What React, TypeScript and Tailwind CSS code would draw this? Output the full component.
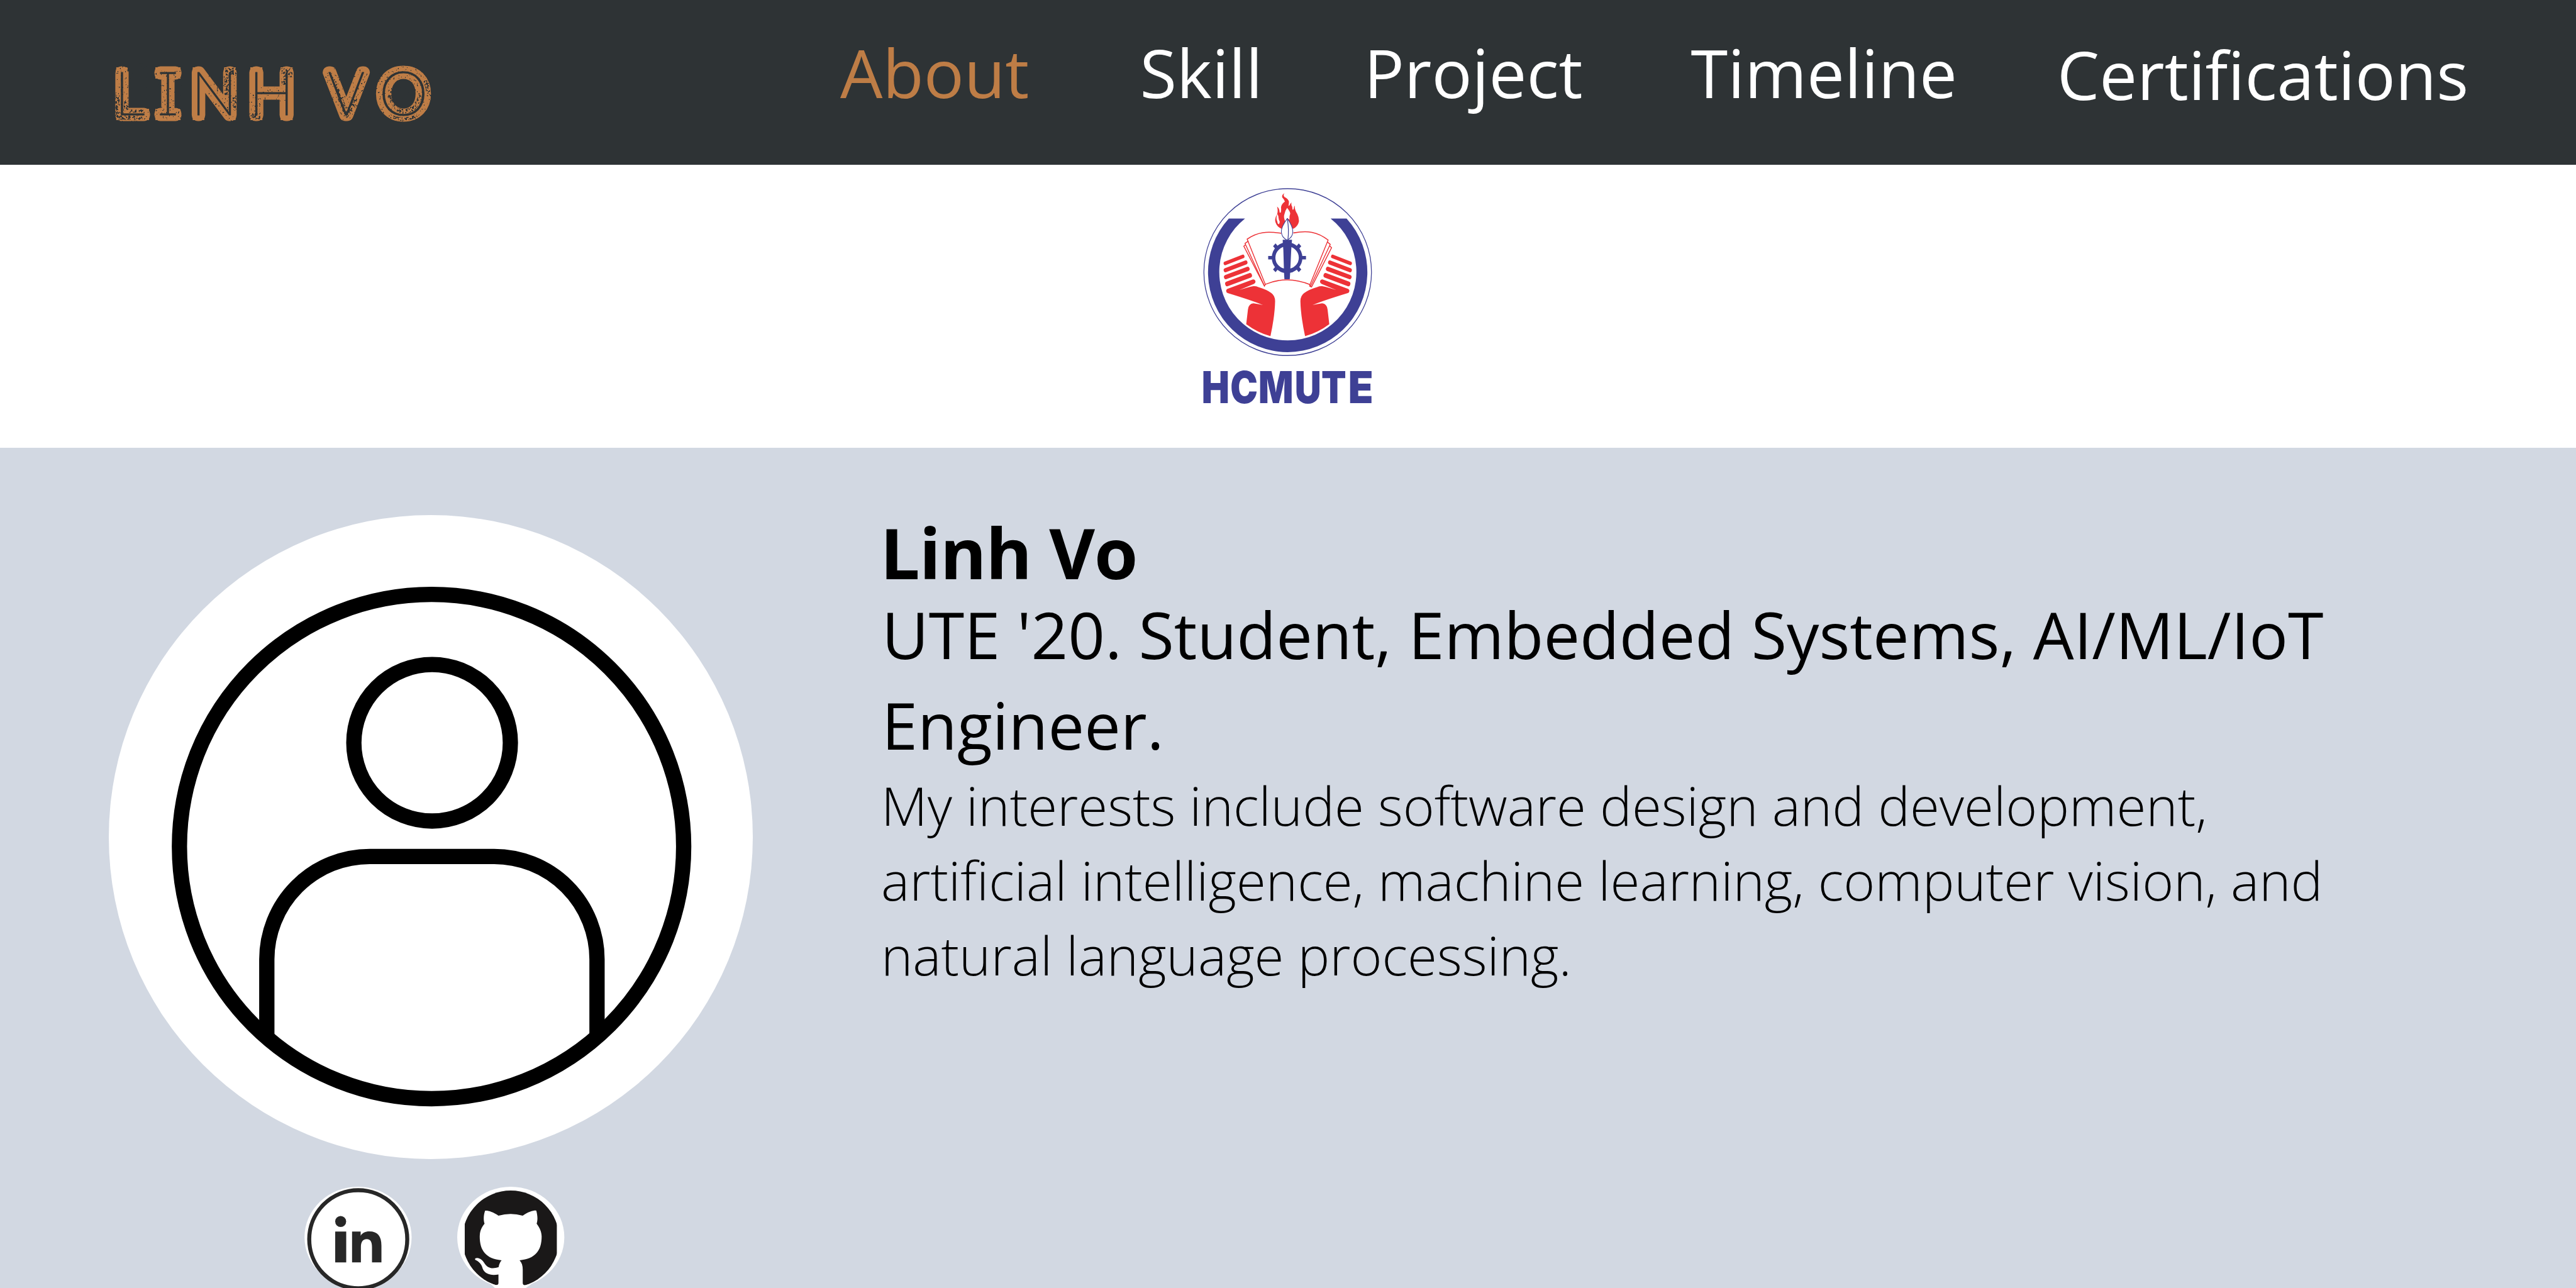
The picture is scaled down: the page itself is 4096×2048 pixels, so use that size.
import React from "react";

type Glyph = { ch: string; x0: number; x1: number };

/* Letters of the school name, each fitted between two horizontal edges. */
const schoolLetters: Glyph[] = [
  { ch: "H", x0: 140, x1: 323 },
  { ch: "C", x0: 350, x1: 540 },
  { ch: "M", x0: 566, x1: 806 },
  { ch: "U", x0: 838, x1: 1014 },
  { ch: "T", x0: 1030, x1: 1209 },
  { ch: "E", x0: 1242, x1: 1405 },
];

const brandLetters = [
  { ch: "L", cx: 352, s: 1 },
  { ch: "I", cx: 450.5, s: 1 },
  { ch: "N", cx: 574.7, s: 1.02 },
  { ch: "H", cx: 728.3, s: 1.06 },
  { ch: "V", cx: 929, s: 1.03 },
  { ch: "O", cx: 1082.5, s: 1.16 },
];

const SCHOOL_SIZE = 290;

function fit({ ch, x0, x1 }: Glyph) {
  const ctx = document.createElement("canvas").getContext("2d")!;
  ctx.font = '900 1000px "Inter"';
  const m = ctx.measureText(ch);
  const left = (-m.actualBoundingBoxLeft * SCHOOL_SIZE) / 1000;
  const right = (m.actualBoundingBoxRight * SCHOOL_SIZE) / 1000;
  const s = (x1 - x0) / (right - left);
  return `translate(${x0 - left * s} 1475) scale(${s} 1)`;
}

function Brand() {
  const glyphs = (color: string, width: number, join: "round" | "miter") => (
    <g fill={color} stroke={color} strokeWidth={width} strokeLinejoin={join} strokeMiterlimit={1.5}>
      {brandLetters.map((l) => (
        <text key={l.ch} transform={`translate(${l.cx} 309) scale(${l.s} 1)`} textAnchor="middle">
          {l.ch}
        </text>
      ))}
    </g>
  );
  return (
    <svg
      viewBox="280 140 920 220"
      className="ml-[165.9px] mt-[83px] h-[130.4px] w-[545.2px] shrink-0 overflow-visible font-['Inter'] text-[158px] font-thin [font-feature-settings:'cv08']"
    >
      <defs>
        <filter id="heavy" filterUnits="userSpaceOnUse" x="280" y="160" width="920" height="180" colorInterpolationFilters="sRGB">
          <feTurbulence type="fractalNoise" baseFrequency="0.18" numOctaves="2" seed="4" />
          <feColorMatrix values="0 0 0 0 .18  0 0 0 0 .2  0 0 0 0 .21  18 0 0 0 -9.1" />
        </filter>
        <filter id="light" filterUnits="userSpaceOnUse" x="280" y="160" width="920" height="180" colorInterpolationFilters="sRGB">
          <feTurbulence type="fractalNoise" baseFrequency="0.22" numOctaves="2" seed="9" />
          <feColorMatrix values="0 0 0 0 .18  0 0 0 0 .2  0 0 0 0 .21  18 0 0 0 -12.1" />
        </filter>
        <mask id="worn" maskUnits="userSpaceOnUse" x="280" y="160" width="920" height="180">
          <g fill="#fff">
            <rect x="309" y="256" width="12" height="60" />
            <rect x="331" y="272" width="14" height="26" />
            <rect x="312" y="310" width="70" height="11" />
            <rect x="346" y="294" width="42" height="8" />
            <rect x="604" y="182" width="30" height="20" />
            <rect x="624" y="256" width="10" height="40" />
            <rect x="602" y="205" width="12" height="50" />
            <rect x="755" y="183" width="30" height="24" />
            <rect x="755" y="205" width="12" height="24" />
            <rect x="672" y="304" width="26" height="16" />
            <path d="M898 210 L930 290 L962 250 L952 290 L930 318 L908 270Z" />
            <path d="M1110 184 L1150 220 L1156 260 L1143 240 L1132 205Z" />
            <path d="M1040 260 Q1060 305 1082 305 Q1120 305 1132 260 L1125 250 Q1110 296 1082 292 Q1058 292 1050 240Z" />
            <path d="M1050 308 Q1082 322 1120 306 L1120 316 Q1080 330 1050 316Z" />
          </g>
        </mask>
        <mask id="aged" maskUnits="userSpaceOnUse" x="280" y="160" width="920" height="180">
          <path
            fill="#fff"
            d="M300 170H400V330H300ZM415 190H490V320H415ZM560 200H640V330H560ZM668 250H700V320H668ZM700 230H770V275H700ZM860 180H1000V330H860ZM1005 170H1160V330H1005Z"
          />
        </mask>
      </defs>
      {glyphs("#be7d46", 32, "round")}
      <g aria-hidden="true">{glyphs("#be7d46", 27, "miter")}</g>
      <g aria-hidden="true">{glyphs("#2e3335", 2, "round")}</g>
      <g mask="url(#worn)">
        <rect x="280" y="160" width="920" height="180" filter="url(#heavy)" />
      </g>
      <g mask="url(#aged)">
        <rect x="280" y="160" width="920" height="180" filter="url(#light)" />
      </g>
    </svg>
  );
}

function Hand() {
  return (
    <g fill="#ed3237" stroke="#ed3237" strokeLinecap="round">
      <path d="M303 557 L436 512" strokeWidth="24" />
      <path d="M305 602 L457 551" strokeWidth="27" />
      <path d="M308 647 L472 594" strokeWidth="29" />
      <path d="M318 692 L489 636" strokeWidth="31" />
      <path
        stroke="none"
        d="M324 723 L512 662 Q528 662 531 676 Q531 688 518 692 L408 733 Q470 715 515 707 Q535 706 552 713 Q612 728 650 752 Q678 770 678 805 Q676 900 643 1036 Q545 1012 461 957 L474 860 Q480 822 515 820 Q550 824 587 831 Q520 805 322 752 Q310 748 310 738 Q310 727 324 723Z"
      />
    </g>
  );
}

function SchoolLogo() {
  return (
    <svg
      viewBox="0 0 1568 1568"
      preserveAspectRatio="none"
      className="ml-[4.7px] mt-[22.8px] h-[379.3px] w-[331.9px] font-['Inter'] text-[290px] font-black"
    >
      <ellipse cx="772.5" cy="614.5" rx="629.5" ry="548.5" fill="none" stroke="#3e4095" strokeWidth="6" />
      <path d="M330 262 A598.5 525 0 1 0 1215 262 L1095 262 A515 450 0 1 1 452 262 Z" fill="#3e4095" />
      <g fill="none" stroke="#ed3237" strokeWidth="6.5">
        <path d="M724 360 C620 345 545 350 468 398 L604 695 Q770 635 940 697 L1076 404 C995 348 920 340 815 357" />
        <path d="M478 410 L452 426 L598 706 L606 692" />
        <path d="M455 436 L443 444 L598 706" />
        <path d="M1070 416 L1092 432 L944 708 L936 697" />
        <path d="M1088 442 L1102 454 L952 712 L934 705" />
      </g>
      <g transform="translate(448 49) scale(.9333 .8167)">
        <path
          fill="#ed3237"
          d="M322 58 Q308 72 322 88 Q352 102 358 125 Q358 140 354 160 Q366 155 368 144 Q372 136 379 131 Q373 150 384 167 Q384 185 390 193 Q399 188 398 170 Q400 162 404 158 Q404 195 425 225 Q440 255 438 285 Q430 325 390 345 L345 262 L300 345 Q255 325 247 280 Q246 250 262 230 Q272 200 262 165 Q280 175 283 213 L291 215 Q297 200 294 170 Q298 145 325 125 Q318 105 304 92 Q298 70 322 58Z"
        />
        <path fill="#fff" d="M343 175 Q325 200 322 225 Q312 250 328 284 L343 258 L362 270 Q360 240 368 222 Q368 205 343 175Z" />
        <path fill="#fff" d="M264 225 Q252 260 262 280 Q268 292 266 300 L278 308 L284 288 Q274 270 272 240Z" />
      </g>
      <g fill="none" stroke="#3e4095">
        <ellipse cx="768" cy="520" rx="101.5" ry="88" strokeWidth="27" />
        <path strokeWidth="23" d="M626 520 H662 M874 520 H910" />
        <path strokeWidth="26" d="M672 435 L696 460 M865 435 L841 460 M672 606 L696 580 M865 606 L841 580" />
      </g>
      <path fill="#3e4095" d="M735 402 H805 L803 425 L799 470 L791 620 L788 661 H748 L745 620 L740 470 L736 425Z" />
      <path
        fill="#fff"
        stroke="#3e4095"
        strokeWidth="5"
        d="M770 262 Q722 318 725 352 Q728 388 768 404 Q810 385 811 350 Q812 315 770 262Z"
      />
      <path fill="none" stroke="#3e4095" strokeWidth="6" d="M770 264 Q784 340 774 402" />
      <Hand />
      <g transform="translate(1546 0) scale(-1 1)">
        <Hand />
      </g>
      <g fill="#3e4095">
        {schoolLetters.map((g) => (
          <text key={g.ch} transform={fit(g)}>
            {g.ch}
          </text>
        ))}
      </g>
    </svg>
  );
}

function Avatar() {
  return (
    <svg viewBox="292 1382 1728 1728" className="h-[1024px] w-[1024px]">
      <circle cx="1156" cy="2246" r="864" fill="#fff" />
      <g fill="none" stroke="#000" strokeWidth="41">
        <circle cx="1158" cy="2271.5" r="676.5" />
        <circle cx="1159.5" cy="1993" r="210" />
        <path d="M716 2790 V2574 A276 276 0 0 1 992 2298 H1326 A276 276 0 0 1 1602 2574 V2790" />
      </g>
    </svg>
  );
}

function LinkedIn() {
  return (
    <svg viewBox="817 3185 288 271" className="h-[160.6px] w-[170.7px]">
      <ellipse cx="961" cy="3320.5" rx="143.7" ry="135.5" fill="#fff" />
      <circle cx="961.5" cy="3325.8" r="131.5" fill="#fff" stroke="#272727" strokeWidth="10.8" />
      <g fill="#272727">
        <circle cx="914.3" cy="3278.2" r="14.7" />
        <path d="M899.7 3305.2 H929.2 V3388 H899.7Z" />
        <path d="M944.9 3305.2 H968 V3316.5 C972 3309 981 3305 991 3305 C1014 3305 1023.7 3318 1023.7 3343 V3388 H998.4 V3347 C998.4 3334 995 3325.3 984.3 3325.3 C973 3325.3 968.6 3334 968.6 3347 V3388 H944.9Z" />
      </g>
    </svg>
  );
}

function GitHub() {
  return (
    <svg viewBox="1227.5 3185 288 271" className="h-[160.6px] w-[170.7px]">
      <ellipse cx="1371.2" cy="3320.5" rx="143.7" ry="135.5" fill="#fff" />
      <clipPath id="badge">
        <rect x="1247.7" y="3185" width="247.1" height="271" />
      </clipPath>
      <circle cx="1371.2" cy="3325.3" r="130" fill="#1a1818" clipPath="url(#badge)" />
      <path
        fill="#fff"
        transform="translate(780 3160) scale(.49745 .33333)"
        d="M1050 268 C1062 264 1092 276 1122 308 Q1188 280 1253 308 C1283 276 1313 264 1326 267 C1334 310 1334 345 1328 372 C1345 405 1355 440 1355 475 C1355 590 1320 655 1236 667 C1248 685 1253 710 1253 740 V850 C1253 864 1259 868 1268 867 L1300 858 L1260 900 H1110 L1075 850 L1105 866 C1116 868 1122 864 1122 850 V781 C1085 791 1050 782 1037 735 C1032 700 1018 680 1004 668 C992 664 992 648 1008 648 C1020 650 1035 662 1045 687 C1062 728 1085 740 1123 722 C1125 700 1130 682 1139 667 C1055 655 1021 590 1021 475 C1021 440 1028 405 1047 372 C1040 345 1042 300 1050 268Z"
      />
    </svg>
  );
}

export default function App() {
  return (
    <div className="flex h-[2048px] w-[4096px] flex-col overflow-hidden bg-[#d2d8e2] font-['Open_Sans',sans-serif] text-black">
      <header className="flex h-[261.6px] shrink-0 items-start bg-[#2e3335]">
        <Brand />
        <nav className="ml-[625px] flex items-start whitespace-nowrap pt-[61.7px] text-[106.67px] leading-none text-white">
          <a className="text-[#be7d46]">About</a>
          <a className="ml-[176px]">Skill</a>
          <a className="ml-[161px]">Project</a>
          <a className="ml-[172px]">Timeline</a>
          <a className="ml-[159px] mt-[3px]">Certifications</a>
        </nav>
      </header>

      <section className="flex h-[450.4px] shrink-0 items-start justify-center bg-white">
        <SchoolLogo />
      </section>

      <main className="flex grow items-start pl-[173px] pt-[106.7px]">
        <div className="flex w-[1024px] shrink-0 flex-col">
          <Avatar />
          <div className="ml-[311.1px] mt-[44.7px] flex gap-[72.6px]">
            <LinkedIn />
            <GitHub />
          </div>
        </div>
        <div className="ml-[204px] w-[2330px] pt-[3.5px]">
          <h1 className="-ml-[1.5px] text-[112px] leading-none font-bold tracking-[-1px]">Linh Vo</h1>
          <h2 className="ml-px mt-[3.3px] text-[102.65px] leading-[143.4px]">
            UTE '20. Student, Embedded Systems, AI/ML/IoT Engineer.
          </h2>
          <p className="-mt-[3px] text-[85.33px] leading-[119.05px] font-light">
            My interests include software design and development, artificial intelligence, machine learning, computer
            vision, and natural language processing.
          </p>
        </div>
      </main>
    </div>
  );
}
